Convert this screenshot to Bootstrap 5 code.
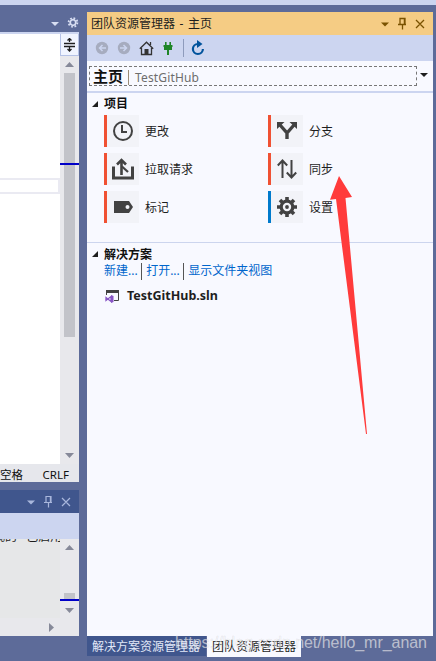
<!DOCTYPE html>
<html lang="zh-CN">
<head>
<meta charset="utf-8">
<meta name="viewport" content="width=device-width, initial-scale=1">
<title>团队资源管理器</title>
<link href="https://cdn.jsdelivr.net/npm/bootstrap@5.3.0/dist/css/bootstrap.min.css" rel="stylesheet">
<style>
body{width:436px;height:661px;overflow:hidden;background:#5d6b99;font:12px/16px "Noto Sans","Noto Sans CJK SC",sans-serif;color:#1e1e1e}
svg{display:block;flex:none}
.top-strip{height:5px;background:#ccd5f0}
.frame{height:656px}
.left-dock{width:79px}
.doc-tabs{height:29px;border-bottom:2px solid #ccd5f0;padding:0 0 2px 0}
.editor{height:430px}
.code{background:#fff;position:relative}
.code-line{position:absolute;left:0;right:0;top:144px;height:16px;border:2px solid #eaeaf2;border-left:0}
.vscroll{width:19px;background:#e8e8ec}
.splitter{height:22px;background:#f0f4ff;border:1px solid #b5c2e6;border-top:0}
.thumb{width:11px;background:#c2c3c9}
.caret-mark{height:2px;width:19px;background:#0000c8;position:absolute;left:0}
.doc-status{height:18px;background:#e6e7ec;padding:3px 10px 0 0;line-height:16px;color:#111;font-size:11.5px}
.tool-title{height:23px;margin-top:8px;background:#40568d;padding-right:8px}
.tool-bar{height:26px;background:#ccd5f0}
.output{height:79px}
.out-text{background:#e6e7e8;position:relative}
.out-line{position:absolute;top:-10px;left:-7px;white-space:pre;line-height:16px}
.hscroll{height:18px;background:#e8e8ec;padding-right:25px}
.explorer{width:346px;margin:7px 3px 0 8px}
.ex-title{height:23px;background:#f5cc84;padding:0 8px 0 4px}
.ex-title span{word-spacing:1.5px}
.ex-tools{height:26px;background:#ccd5f0;padding-left:8px}
.ex-search{height:32px;background:#f8f9ff;border-bottom:2px solid #ccd5f0;padding:5px 3px 5px 2px}
.search-box{width:328px;height:20px;border:1px dashed #777;padding:0 0 0 3px}
.page-name{font-size:15px;font-weight:700;line-height:19px;color:#111}
.bar{width:1px;background:#9a8b76;height:15px;margin:3px 0 0 5px}
.repo{color:#6d6d6d;line-height:21px;margin-left:6px;letter-spacing:.15px}
.ex-body{background:#f8f9ff;height:543px}
.section-head{height:16px;font-weight:700;color:#111;padding-left:4px}
.projects{height:150px;padding-top:3px;border-bottom:1px solid #ccd5ee}
.tiles{display:grid;grid-template-columns:164px 164px;grid-auto-rows:32px;row-gap:6px;padding:3px 0 0 17px}
.tile{gap:6px}
.tile span{padding-top:2px}
.tile-icon{width:35px;height:32px;background:#f2f3f8;border-left:3px solid #f05133}
.tile-icon.blue{border-color:#007acc}
.links{padding-left:17px;height:17px;color:#0066cc}
.links span+span{border-left:1px solid #555;padding-left:4px;margin-left:3.5px}
.sln{padding:0 0 0 18px;font-weight:700;height:32px}
.sln-name{font-size:12.5px}
.dock-tabs{height:21px}
.dock-tab{background:#40568d;color:#e2e8f8;width:119px;height:20px;padding:3px 0 0 5px}
.dock-tab.on{background:#f8f9ff;color:#1e1e1e;height:21px;margin-left:1px;width:94px}
.overlay{position:absolute;left:0;top:0;pointer-events:none}
</style>
</head>
<body>
<div class="top-strip"></div>
<div class="frame d-flex">
  <div class="left-dock d-flex flex-column flex-shrink-0">
    <div class="doc-tabs d-flex justify-content-end align-items-end flex-shrink-0">
      <svg width="29" height="20" viewBox="0 0 29 20"><path d="M1 12h8l-4 4z" fill="#d8def2"/><g transform="translate(23 12.500)" fill="none" stroke="#d8def2"><circle r="2.800" stroke-width="1.800"/><circle r="4.400" stroke-width="1.800" stroke-dasharray="1.728 1.728"/></g></svg>
    </div>
    <div class="editor d-flex flex-shrink-0">
      <div class="code flex-grow-1"><div class="code-line"></div></div>
      <div class="vscroll position-relative d-flex flex-column align-items-center">
        <div class="splitter w-100 d-flex justify-content-center"><svg width="13" height="16" viewBox="0 0 13 16" class="mt-1"><path d="M1 5.500h11M1 8.500h11M6.500 0v4M6.500 9v4M4.500 2.500l2-2 2 2M4.500 11l2 2 2-2" fill="none" stroke="#1e1e1e" stroke-width="1.300"/></svg></div>
        <svg width="19" height="17"><path d="M5 11h9l-4.500-5z" fill="#868999"/></svg>
        <div class="thumb" style="height:264px"></div>
        <svg class="mt-auto" width="19" height="14"><path d="M5 3h9l-4.500 5z" fill="#868999"/></svg>
        <div class="caret-mark" style="top:129px"></div>
      </div>
    </div>
    <div class="doc-status d-flex justify-content-between flex-shrink-0"><span>空格</span><span>CRLF</span></div>
    <div class="tool-title d-flex justify-content-end align-items-center flex-shrink-0">
      <svg width="45" height="14" fill="none" stroke="#a9b7dc" stroke-width="1.200"><path d="M1 5.500h8l-4 4z" fill="#a9b7dc" stroke="none"/><path d="M20 7.500V1.500h5v6M18 7.500h8M22.500 7.500v5M24.400 2v5M36 3l8 8M44 3l-8 8"/></svg>
    </div>
    <div class="tool-bar flex-shrink-0"></div>
    <div class="output d-flex flex-shrink-0">
      <div class="out-text flex-grow-1 overflow-hidden"><div class="out-line">规的   已启用</div></div>
      <div class="vscroll position-relative d-flex flex-column align-items-center">
        <svg width="19" height="54"><path d="M5 11h9l-4.500-5z" fill="#868999"/></svg>
        <div class="thumb" style="height:6px"></div>
        <svg class="mt-auto" width="19" height="16"><path d="M5 6h9l-4.500 5z" fill="#868999"/></svg>
        <div class="caret-mark" style="top:60px"></div>
      </div>
    </div>
    <div class="hscroll d-flex justify-content-end flex-shrink-0"><svg width="5" height="18"><path d="M0 5v9l5-4.500z" fill="#868999"/></svg></div>
  </div>

  <div class="explorer flex-shrink-0">
    <div class="ex-title d-flex justify-content-between align-items-center">
      <span>团队资源管理器 - 主页</span>
      <svg width="45" height="14" fill="none" stroke="#7a5200" stroke-width="1.300"><path d="M1 5.500h8l-4 4z" fill="#7a5200" stroke="none"/><path d="M20 7.500V1.500h5v6M18 7.500h8M22.500 7.500v5M24.400 2v5M36 3l8 8M44 3l-8 8" /></svg>
    </div>
    <div class="ex-tools d-flex align-items-center">
      <svg width="115" height="26">
        <g fill="#a6acbf"><circle cx="7" cy="13" r="6.200"/><circle cx="29" cy="13" r="6.200"/></g>
        <path d="M11 13H4.500M7.500 10l-3 3 3 3M25 13h6.500M28.500 10l3 3-3 3" fill="none" stroke="#ccd5f0" stroke-width="1.500"/>
        <path d="M46.500 13v6.500h10V13M44.800 13.700l6.700-6.500 6.700 6.500M55.500 7v3" fill="none" stroke="#333" stroke-width="1.300"/><path d="M49.500 14h4v5h-4z" fill="#333"/>
        <path d="M70 7h1.600v3h2.800V7H76v3h1.500v2H77v3h-3v5h-2v-5h-3v-3h-.5v-2H70z" fill="#1e8527"/>
        <path d="M88.500 4v18" stroke="#8e9bbc"/>
        <path d="M107.900 14a5 5 0 1 1-5-5" fill="none" stroke="#00539c" stroke-width="2.200"/><path d="M102 5l5.500 4-5.500 4z" fill="#00539c"/>
      </svg>
    </div>
    <div class="ex-search d-flex justify-content-between">
      <div class="search-box d-flex"><span class="page-name">主页</span><span class="bar"></span><span class="repo">TestGitHub</span></div>
      <svg width="10" height="18"><path d="M0 7h8l-4 4z" fill="#1e1e1e"/></svg>
    </div>
    <div class="ex-body">
      <div class="projects">
        <div class="section-head d-flex"><svg width="13" height="16"><path d="M7 5v6H1z" fill="#1e1e1e"/></svg>项目</div>
        <div class="tiles">
          <div class="tile d-flex align-items-center"><div class="tile-icon d-flex align-items-center justify-content-center"><svg width="24" height="24" fill="none" stroke="#424242" stroke-width="2"><circle cx="12" cy="12" r="9"/><path d="M11 6v7h5"/></svg></div><span>更改</span></div>
          <div class="tile d-flex align-items-center"><div class="tile-icon d-flex align-items-center justify-content-center"><svg width="24" height="24"><path d="M12 20v-6L5 6M12 14l7-8" fill="none" stroke="#424242" stroke-width="3.400"/><path d="M2 3h7.500L2 10zM22 3h-7.500L22 10z" fill="#424242"/></svg></div><span>分支</span></div>
          <div class="tile d-flex align-items-center"><div class="tile-icon d-flex align-items-center justify-content-center"><svg width="24" height="24" fill="none" stroke="#424242"><path d="M2.500 9.500V21h19V9.500" stroke-width="3"/><path d="M10.500 18V3M6 7.500L10.500 3 15 7.500" stroke-width="2.600"/><path d="M11 9.500l6 5.500" stroke-width="2.200"/></svg></div><span>拉取请求</span></div>
          <div class="tile d-flex align-items-center"><div class="tile-icon d-flex align-items-center justify-content-center"><svg width="24" height="24" fill="none" stroke="#424242" stroke-width="2"><path d="M7.500 21V4M2.800 8.500l4.700-5 4.700 5M16.500 3v17M11.800 15.500l4.700 5 4.700-5"/></svg></div><span>同步</span></div>
          <div class="tile d-flex align-items-center"><div class="tile-icon d-flex align-items-center justify-content-center"><svg width="24" height="24"><path fill-rule="evenodd" d="M3 6h15l4 6-4 6H3zM16.500 10a2 2 0 1 0 0 4 2 2 0 0 0 0-4z" fill="#424242"/></svg></div><span>标记</span></div>
          <div class="tile d-flex align-items-center"><div class="tile-icon blue d-flex align-items-center justify-content-center"><svg width="24" height="24"><g transform="translate(12 12)"><circle r="5.800" fill="none" stroke="#424242" stroke-width="3.200"/><circle r="1.900" fill="#424242"/><path d="M0-10v4M0 10V6M-10 0h4M10 0H6M-7-7l3 3M7 7L4 4M-7 7l3-3M7-7L4-4" stroke="#424242" stroke-width="3.600"/></g></svg></div><span>设置</span></div>
        </div>
      </div>
      <div class="section-head d-flex mt-1"><svg width="13" height="16"><path d="M7 4v6H1z" fill="#1e1e1e"/></svg>解决方案</div>
      <div class="links d-flex"><span>新建...</span><span>打开...</span><span>显示文件夹视图</span></div>
      <div class="sln d-flex align-items-center"><svg class="me-2" width="14" height="14"><path d="M1.500 6V2.500h12v9H9" fill="none" stroke="#424242" stroke-width="1"/><path d="M1 1h13v3H1z" fill="#424242"/><path d="M1 8.500l5 4v-5l-5 4z" fill="none" stroke="#8855c5" stroke-width="1.300"/><path d="M6 6l2.500 1v6L6 14z" fill="#8855c5"/></svg><span class="sln-name">TestGitHub.sln</span></div>
    </div>
    <div class="dock-tabs d-flex"><div class="dock-tab">解决方案资源管理器</div><div class="dock-tab on">团队资源管理器</div></div>
  </div>
</div>
<svg class="overlay" width="436" height="661"><path d="M339 176l13 21-6.500 1L367 434h-1L336 199l-6 .7z" fill="#ff3b3b"/><text x="175" y="648" font-family="Liberation Sans, Arial, sans-serif" font-size="16" textLength="252" fill="#fff" fill-opacity=".62" stroke="#777" stroke-opacity=".18" stroke-width=".6">https://blog.csdn.net/hello_mr_anan</text></svg>
<script src="https://cdn.jsdelivr.net/npm/bootstrap@5.3.0/dist/js/bootstrap.bundle.min.js"></script>
</body>
</html>
